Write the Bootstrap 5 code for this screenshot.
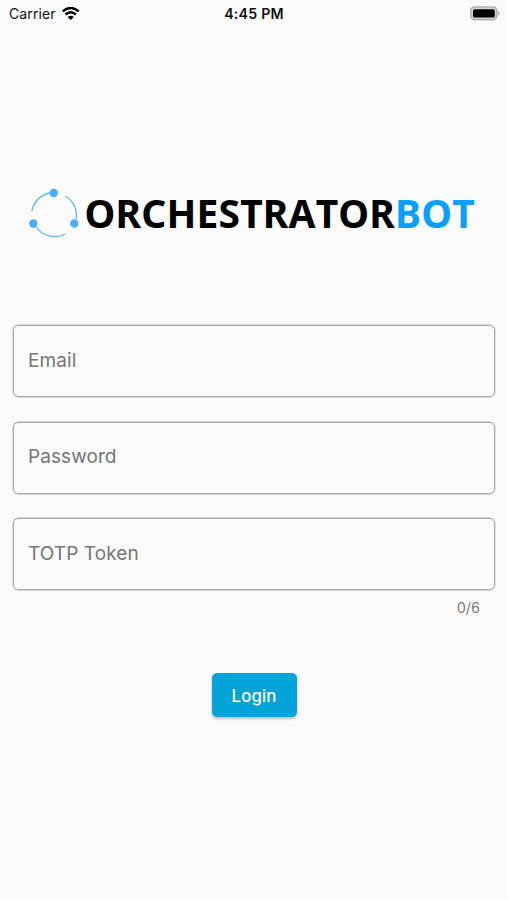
<!DOCTYPE html>
<html lang="en">
<head>
<meta charset="utf-8">
<meta name="viewport" content="width=device-width, initial-scale=1">
<title>OrchestratorBot</title>
<link href="https://cdn.jsdelivr.net/npm/bootstrap@5.3.0/dist/css/bootstrap.min.css" rel="stylesheet">
<style>
body{background:#fafafa;font-family:Inter,"Liberation Sans",sans-serif;color:#111;height:900px;overflow:hidden}
.status-bar{height:28px;padding:0 6px 0 9px;font-size:14px;line-height:28px}
.status-bar>div{flex:1 1 0}
.carrier{letter-spacing:.12px}
.clock{font-size:14.2px;letter-spacing:.2px;margin-left:-2px}
.brand{margin-top:158px;height:54px;padding-left:27px}
.wordmark{font:700 39px/54px "Noto Sans","Open Sans",sans-serif;font-kerning:none;letter-spacing:.15px;color:#000;margin-left:4.6px;white-space:nowrap}
.wordmark span{color:#08a0fb}
.login-form{margin-top:85px;padding:0 12px 0 13px}
.field{height:72px;border:1px solid #a9a9a9;box-shadow:0 0 0 .4px #b8b8b8;border-radius:5px;background:transparent;padding:0 14px 2px;font-size:19px;letter-spacing:.08px;margin-bottom:24.5px}
.field::placeholder{color:#757575;opacity:1}
.field.token{margin-bottom:0}
.counter{font-size:14.5px;line-height:20px;color:#7a7a7a;margin-top:8px;padding-right:15px}
.login-btn{width:85px;height:44px;margin-top:55px;background:#05a4d8;border:0;border-radius:5px;color:#fff;font-size:16.8px;font-weight:500;letter-spacing:.1px;box-shadow:0 2px 3px rgba(0,0,0,.24)}
</style>
</head>
<body>
<header class="status-bar d-flex align-items-center">
  <div class="d-flex align-items-center"><span class="carrier">Carrier</span>
    <svg class="ms-1" width="21" height="15" viewBox="-.7 .8 21 15" fill="none" stroke="#000" stroke-width="2.5"><path d="M2 5.2Q10-1.6 18 5.2M4.8 8.3Q10 3.8 15.2 8.3"/><path d="M10 13.7 6.9 10.7Q10 8.3 13.1 10.7Z" fill="#000" stroke="none"/></svg>
  </div>
  <div class="clock text-center fw-semibold">4:45 PM</div>
  <div class="d-flex justify-content-end">
    <svg width="32" height="16" viewBox="0 .8 32 16"><rect x="1.8" y="1.8" width="26" height="12.6" rx="3.8" fill="#d8d8d8" stroke="#b0b0b0" stroke-width="1.6"/><rect x="4" y="4" width="21.8" height="8.4" rx="1.5" fill="#000"/><path d="M29.2 5.6q3.2 2.5 0 5z" fill="#b0b0b0"/></svg>
  </div>
</header>
<main>
  <div class="brand d-flex align-items-center">
    <svg class="flex-shrink-0" width="53" height="54" viewBox="27 186 53 54" fill="none" stroke="#66b9f5" stroke-width="1.4"><path d="M31.8 211A22.5 22.5 0 0 1 53.8 192.7M65.2 196A22.8 22.8 0 0 1 76.3 219M35.5 226A22.8 22.8 0 0 0 65.3 234"/><g fill="#47aff8" stroke="none"><circle cx="53.8" cy="193" r="4.2"/><circle cx="33.3" cy="223.5" r="4.2"/><circle cx="74.3" cy="223.5" r="4.2"/></g></svg>
    <div class="wordmark">ORCHESTRATOR<span>BOT</span></div>
  </div>
  <form class="login-form">
    <input class="field form-control" type="email" placeholder="Email" aria-label="Email">
    <input class="field form-control" type="password" placeholder="Password" aria-label="Password">
    <input class="field token form-control" type="text" maxlength="6" placeholder="TOTP Token" aria-label="TOTP Token">
    <div class="counter text-end">0/6</div>
    <div class="text-center"><button class="btn login-btn px-0 pb-0 pt-1" type="button">Login</button></div>
  </form>
</main>
<script src="https://cdn.jsdelivr.net/npm/bootstrap@5.3.0/dist/js/bootstrap.bundle.min.js"></script>
</body>
</html>
